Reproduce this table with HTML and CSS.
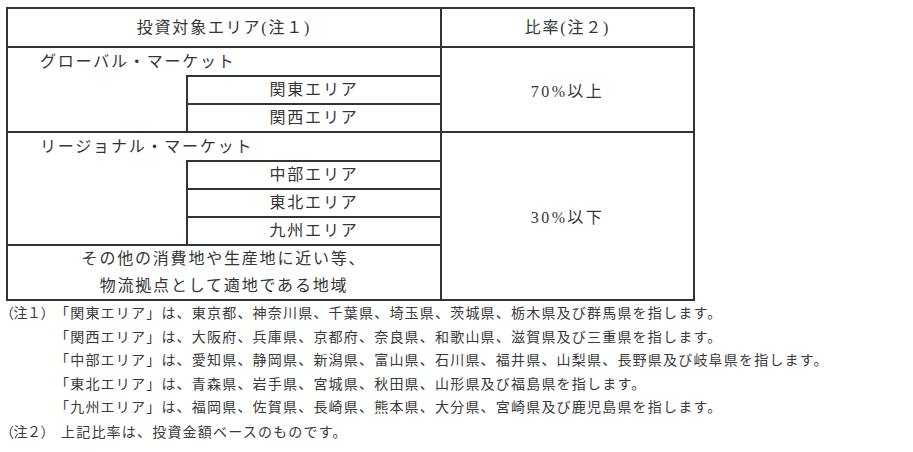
FILE: index.html
```html
<!DOCTYPE html>
<html lang="ja">
<head>
<meta charset="utf-8">
<title>投資対象エリア</title>
<link rel="stylesheet" href="styles.css">
</head>
<body>
<div class="page">
  <table class="areas">
    <colgroup><col class="c-blank"><col class="c-sub"><col class="c-ratio"></colgroup>
    <thead>
      <tr><th colspan="2">投資対象エリア(注１)</th><th>比率(注２)</th></tr>
    </thead>
    <tbody>
      <tr><td class="group" colspan="2">グローバル・マーケット</td><td class="ratio" rowspan="3">70%以上</td></tr>
      <tr><td class="blank" rowspan="2"></td><td class="sub">関東エリア</td></tr>
      <tr><td class="sub">関西エリア</td></tr>
      <tr><td class="group" colspan="2">リージョナル・マーケット</td><td class="ratio" rowspan="5">30%以下</td></tr>
      <tr><td class="blank" rowspan="3"></td><td class="sub">中部エリア</td></tr>
      <tr><td class="sub">東北エリア</td></tr>
      <tr><td class="sub">九州エリア</td></tr>
      <tr><td class="other" colspan="2">その他の消費地や生産地に近い等、<br>物流拠点として適地である地域</td></tr>
    </tbody>
  </table>
  <div class="notes">
    <div class="label">（注１）</div>
    <div class="text">「関東エリア」は、東京都、神奈川県、千葉県、埼玉県、茨城県、栃木県及び群馬県を指します。<br>「関西エリア」は、大阪府、兵庫県、京都府、奈良県、和歌山県、滋賀県及び三重県を指します。<br>「中部エリア」は、愛知県、静岡県、新潟県、富山県、石川県、福井県、山梨県、長野県及び岐阜県を指します。<br>「東北エリア」は、青森県、岩手県、宮城県、秋田県、山形県及び福島県を指します。<br>「九州エリア」は、福岡県、佐賀県、長崎県、熊本県、大分県、宮崎県及び鹿児島県を指します。</div>
    <div class="label last">（注２）</div>
    <div class="text last indent">上記比率は、投資金額ベースのものです。</div>
  </div>
</div>
</body>
</html>
```
FILE: styles.css
```css
html, body {
  margin: 0;
  padding: 0;
  background: #ffffff;
}

body {
  font-family: "Liberation Serif", "Noto Sans CJK JP", serif;
  color: #353535;
}

.page {
  padding: 7px 0 0 6px;
}

.areas {
  border-collapse: collapse;
  table-layout: fixed;
  width: 687px;
  font-size: 16px;
  letter-spacing: 1.8px;
}

.c-blank { width: 180px; }
.c-sub { width: 254px; }
.c-ratio { width: 253px; }

.areas th,
.areas td {
  border: 2px solid #333333;
  padding: 0;
  font-weight: normal;
  text-align: center;
  vertical-align: middle;
  white-space: nowrap;
}

.areas th {
  line-height: 37px;
}

.areas td.group {
  line-height: 27px;
  text-align: left;
  padding-left: 32px;
  border-bottom: none;
}

.areas td.blank {
  border-top: none;
}

.areas td.sub {
  line-height: 26px;
}

.areas td.ratio {
  letter-spacing: 2.4px;
}

.areas td.other {
  line-height: 26.5px;
}

.notes {
  display: grid;
  grid-template-columns: 55px 1fr;
  margin-left: -6px;
  font-family: "Noto Sans CJK JP", sans-serif;
  font-size: 14px;
  letter-spacing: 1.2px;
  line-height: 23.5px;
  color: #3a3a3a;
  white-space: nowrap;
}

.notes .label {
  letter-spacing: -0.5px;
  overflow: hidden;
}

.notes .last {
  margin-top: 1px;
}

.notes .indent {
  padding-left: 6px;
}
```
